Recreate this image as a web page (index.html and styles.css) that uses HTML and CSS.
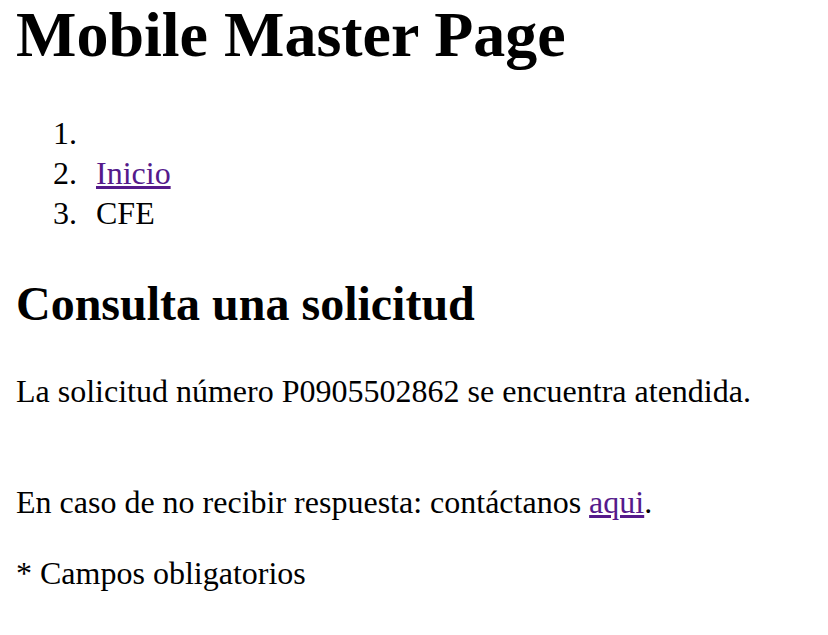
FILE: index.html
```html
<!DOCTYPE html>
<html lang="es">
<head>
<meta charset="utf-8">
<title>Mobile Master Page</title>
<link rel="stylesheet" href="styles.css">
</head>
<body>
<h1 class="site-title">Mobile Master Page</h1>
<ol class="breadcrumb">
  <li></li>
  <li><a href="#" class="link">Inicio</a></li>
  <li>CFE</li>
</ol>
<h2 class="section-title">Consulta una solicitud</h2>
<p class="text status">La solicitud número P0905502862 se encuentra atendida.</p>
<p class="text">En caso de no recibir respuesta: contáctanos <a href="#" class="link">aqui</a>.</p>
<p class="text">* Campos obligatorios</p>
</body>
</html>
```

FILE: styles.css
```css
html, body {
  background: #ffffff;
}
body {
  margin: 0 16px;
  font-family: "Liberation Serif", "Times New Roman", serif;
  font-size: 32px;
  line-height: 40px;
  color: #000000;
}
.site-title {
  font-size: 64px;
  line-height: 64px;
  font-weight: bold;
  margin: 3px 0 46px;
}
.breadcrumb {
  list-style: none;
  counter-reset: item;
  margin: 0;
  padding-left: 37px;
}
.breadcrumb li {
  counter-increment: item;
  min-height: 40px;
}
.breadcrumb li::before {
  content: counter(item) ".";
  display: inline-block;
  width: 43px;
}
.section-title {
  font-size: 48px;
  line-height: 56px;
  font-weight: bold;
  margin: 43px 0 39px;
}
.text {
  margin: 0 0 31px;
}
.text.status {
  margin-bottom: 71px;
}
.link {
  color: #551a8b;
  text-decoration: underline;
}
```
